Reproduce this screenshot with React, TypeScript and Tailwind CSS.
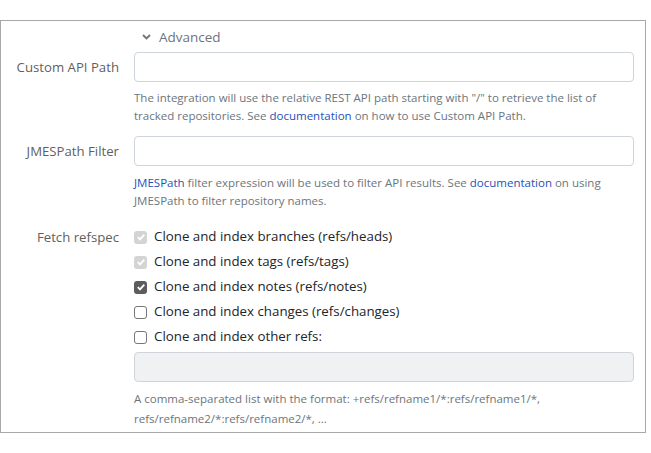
import React from 'react';

const font = { fontFamily: '"Open Sans", "Noto Sans", sans-serif' };

function Check({ state }: { state: 'disabled' | 'checked' | 'off' }) {
    if (state === 'off') {
        return <span className="inline-block w-[13px] h-[13px] rounded-[3px] border border-[#767676] bg-white shrink-0" />;
    }
    const bg = state === 'disabled' ? 'bg-[#d4d4d4]' : 'bg-[#5c5c5c]';
    return (
        <span className={`inline-flex items-center justify-center w-[13px] h-[13px] rounded-[3px] shrink-0 ${bg}`}>
            <svg width="10" height="10" viewBox="0 0 10 10">
                <path d="M1.8 5.2 L4 7.4 L8.3 2.6" fill="none" stroke="white" strokeWidth="1.8" />
            </svg>
        </span>
    );
}

const refs: { label: string; state: 'disabled' | 'checked' | 'off' }[] = [
    { label: 'Clone and index branches (refs/heads)', state: 'disabled' },
    { label: 'Clone and index tags (refs/tags)', state: 'disabled' },
    { label: 'Clone and index notes (refs/notes)', state: 'checked' },
    { label: 'Clone and index changes (refs/changes)', state: 'off' },
    { label: 'Clone and index other refs:', state: 'off' },
];

export default function App() {
    return (
        <div className="w-[651px] h-[453px] bg-white pt-5" style={font}>
            <div className="w-[646px] h-[413px] border border-[#a8a8a8] pt-[6px]">
                <div className="grid grid-cols-[133px_500px] items-start">
                    {/* Advanced toggle */}
                    <div />
                    <div className="flex items-center gap-[8px] pl-2 h-5 text-[13.5px] text-[#6c757d]">
                        <svg width="9" height="6" viewBox="0 0 9 6">
                            <path d="M1 1 L4.5 4.5 L8 1" fill="none" stroke="#6c757d" strokeWidth="1.8" />
                        </svg>
                        <span>Advanced</span>
                    </div>

                    {/* Custom API Path */}
                    <label className="text-right pr-[15px] text-[13.2px] text-[#5f5f5f] leading-[30px] mt-[5px]">Custom API Path</label>
                    <div className="mt-[5px]">
                        <input className="w-full h-[30px] rounded border border-[#ced4da] bg-white" />
                        <p className="mt-[7px] text-[11.5px] leading-[18px] text-[#6c757d]">
                            The integration will use the relative REST API path starting with "/" to retrieve the list of tracked repositories. See <a className="text-[#1f4fb5]">documentation</a> on how to use Custom API Path.
                        </p>
                    </div>

                    {/* JMESPath Filter */}
                    <label className="text-right pr-[15px] text-[13.2px] text-[#5f5f5f] leading-[30px] mt-[11px]">JMESPath Filter</label>
                    <div className="mt-[11px]">
                        <input className="w-full h-[30px] rounded border border-[#ced4da] bg-white" />
                        <p className="mt-[8px] text-[11.5px] leading-[18px] text-[#6c757d]">
                            <a className="text-[#1f4fb5]">JMESPath</a> filter expression will be used to filter API results. See <a className="text-[#1f4fb5]">documentation</a> on using JMESPath to filter repository names.
                        </p>
                    </div>

                    {/* Fetch refspec */}
                    <label className="text-right pr-[15px] text-[13.2px] text-[#5f5f5f] leading-5 mt-[17px]">Fetch refspec</label>
                    <div className="mt-[17px]">
                        <div className="flex flex-col gap-[5px]">
                            {refs.map((r) => (
                                <div key={r.label} className="flex items-center gap-[7px] h-5 text-[13.3px] text-[#212529]">
                                    <Check state={r.state} />
                                    <span>{r.label}</span>
                                </div>
                            ))}
                        </div>
                        <input disabled className="mt-[5px] w-full h-[30px] rounded border border-[#ced4da] bg-[#f0f1f3]" />
                        <p className="mt-[7px] text-[11.5px] leading-[20px] text-[#6c757d]">
                            A comma-separated list with the format: +refs/refname1/*:refs/refname1/*, refs/refname2/*:refs/refname2/*, ...
                        </p>
                    </div>
                </div>
            </div>
        </div>
    );
}
